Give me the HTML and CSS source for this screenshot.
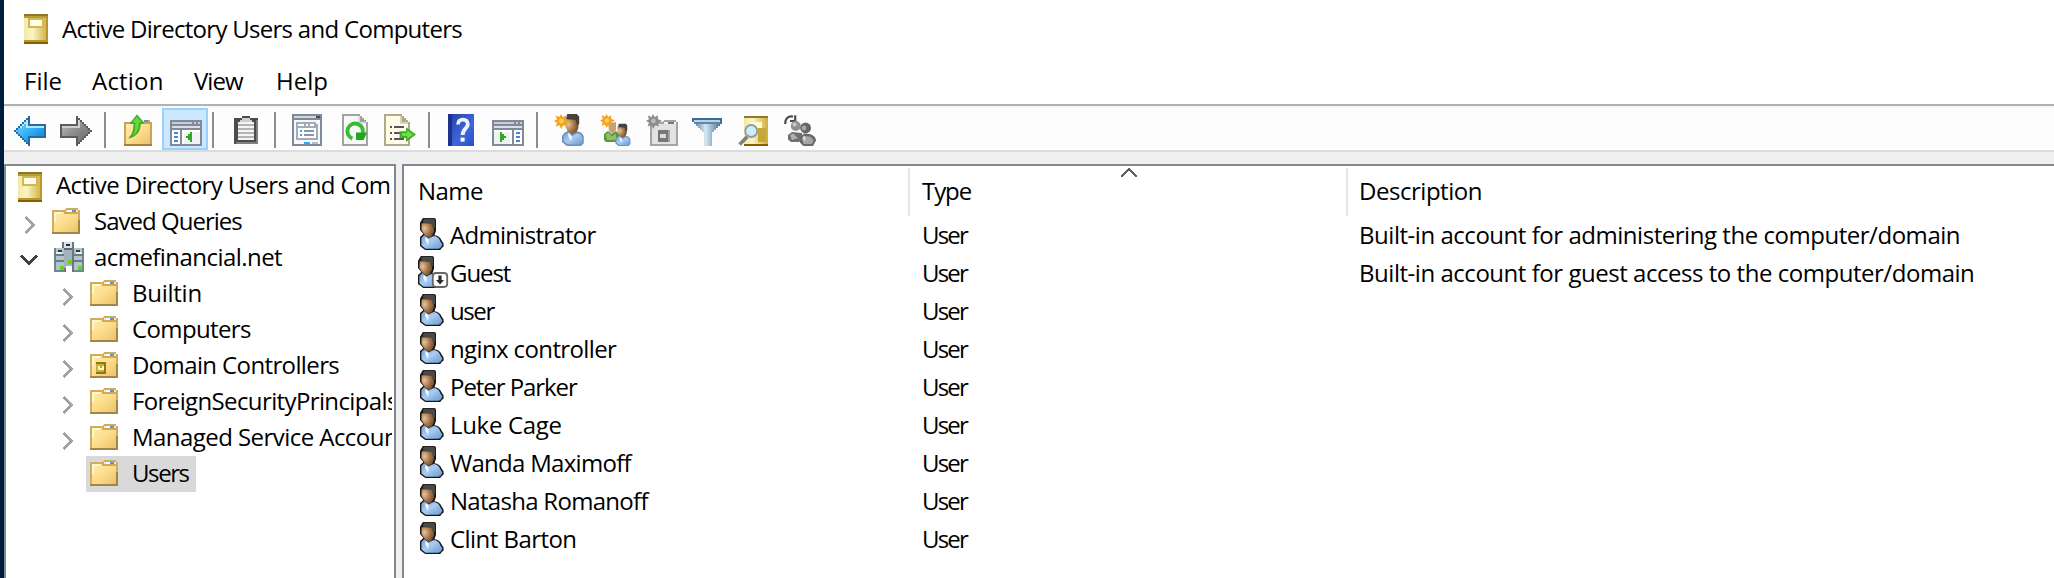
FILE: index.html
```
<!DOCTYPE html>
<html lang="en">
<head>
<meta charset="utf-8">
<title>Active Directory Users and Computers</title>
<link rel="stylesheet" href="styles.css">
</head>
<body>
<svg class="defs" aria-hidden="true">
  <defs>
    <linearGradient id="gold" x2="1" y2="0"><stop offset="0" stop-color="#f3e9a4"/><stop offset=".35" stop-color="#fbf4c4"/><stop offset="1" stop-color="#cfae3c"/></linearGradient>
    <linearGradient id="fold" x2="1" y2="1"><stop offset="0" stop-color="#ffedb0"/><stop offset=".5" stop-color="#fddc8a"/><stop offset="1" stop-color="#e9c36c"/></linearGradient>
    <linearGradient id="blue" x2="1" y2="1"><stop offset="0" stop-color="#7fd4ff"/><stop offset=".5" stop-color="#35b0f5"/><stop offset="1" stop-color="#0f78c8"/></linearGradient>
    <linearGradient id="grey" x2="1" y2="1"><stop offset="0" stop-color="#c0c0c0"/><stop offset=".5" stop-color="#8c8c8c"/><stop offset="1" stop-color="#6a6a6a"/></linearGradient>
    <radialGradient id="skin" cx=".25" cy=".35" r=".9"><stop offset="0" stop-color="#e8c49a"/><stop offset=".45" stop-color="#ac7c50"/><stop offset="1" stop-color="#543a26"/></radialGradient>
    <linearGradient id="shirt" x2="1" y2="1"><stop offset="0" stop-color="#6f9fd6"/><stop offset=".45" stop-color="#a9ccf3"/><stop offset="1" stop-color="#6a98ce"/></linearGradient>
    <linearGradient id="help" x2="1" y2="1"><stop offset="0" stop-color="#2440a0"/><stop offset=".6" stop-color="#3f66dc"/><stop offset="1" stop-color="#2a4cc0"/></linearGradient>
    <linearGradient id="tube" x2="1" y2="0"><stop offset="0" stop-color="#41688c"/><stop offset=".45" stop-color="#d6e8f4"/><stop offset="1" stop-color="#3e6488"/></linearGradient>

    <symbol id="book" viewBox="0 0 12 15">
      <path fill="url(#gold)" d="M0 0h12v15H0z"/>
      <path fill="#8f7626" d="M0 0h12v1H0z"/><path fill="#b89c3c" d="M0 1h12v1H0z"/>
      <path fill="#d0b858" d="M2 2h8v5H2z"/><path fill="#fffde2" d="M3 3h6v3H3z"/>
      <path fill="#b8962c" d="M11 1h1v13h-1zM0 13h12v1H0z"/><path fill="#865c04" d="M0 14h12v1H0z"/>
    </symbol>

    <symbol id="folder" viewBox="0 0 14 13">
      <path fill="#d0ab62" d="M0 1h6l1-1h6v1h1v12H0z"/>
      <path fill="url(#fold)" d="M1 2h5l1 1h6v9H1z"/>
      <path fill="#fff6cc" d="M1 2h4v1H1zM1 3h1v4H1z"/>
      <path fill="#ffe7a6" d="M7 1h6v1H7z"/><path fill="#f6fbff" d="M8 1h2v1H8z"/><path fill="#4a9be0" d="M10 1h2v1h-2z"/>
      <path fill="#d2a85c" d="M6 2h8v1H6z"/>
      <path fill="#957840" d="M0 12h14v1H0zM13 6h1v6h-1z" opacity=".75"/>
    </symbol>

    <symbol id="folder-dc" viewBox="0 0 14 13">
      <use href="#folder" width="14" height="13"/>
      <path fill="#8c7618" d="M3 5h5v6H3z"/><path fill="#c9b03c" d="M3 6h4v4H3z"/><path fill="#fff9b8" d="M4 7h3v2H4z"/><path fill="#b0a030" d="M5 7h1v1H5z"/>
    </symbol>

    <symbol id="domain" viewBox="0 0 15 15">
      <path fill="#687882" d="M4 0h6v15H4z"/><path fill="#d8e2e8" d="M5 0h4v3H5z"/><path fill="#a3b2bb" d="M5 3h4v10H5z"/>
      <path fill="#1c3440" d="M6 1h2v1H6z"/><path fill="#5c6c76" d="M5 3h4v1H5z"/><path fill="#fff" d="M6 12h3v3H6z"/>
      <path fill="#74858f" d="M0 3h5v12H0zM10 3h5v12h-5z"/>
      <path fill="#b5c3cb" d="M1 3h4v11H1zM10 3h4v11h-4z"/>
      <path fill="#e8eff3" d="M1 5h3v1H1zM11 5h3v1h-3z"/>
      <path fill="#21404e" d="M2 4h2v1H2zM11 4h2v1h-2z"/>
      <path fill="#6b7c86" d="M0 6h5v1H0zM10 6h5v1h-5zM0 9h5v1H0zM10 9h5v1h-5z"/>
      <path fill="#54e010" d="M7 9h2v2H7zM3 12h2v2H3zM12 12h2v2h-2z"/>
    </symbol>

    <symbol id="person" viewBox="0 0 16 16">
      <g shape-rendering="auto">
        <path fill="#1a1714" d="M2.4 0H8a1 1 0 0 1 1 1v5.500L8.200 8.600c1.800.2 3.100 1.200 3.600 2.600l1 1.500v1.600l-.8.600-.9 1.100H3.600L1 14V9.500L2.700 8 1 6V2.400z"/>
        <path fill="url(#skin)" d="M1.800 2.600h5L8 4v2.600L7 9 5 10 3.200 8.200 1.700 6z"/>
        <path fill="#4b4846" d="M2.800.4H8l.5 1v3.400l-.9.600L6.900 3 2.400 2.200z"/>
        <path fill="url(#shirt)" d="M1.700 10l1.400-1.500L5 10.300 7.800 9c1.900.2 2.900 1.200 3.300 2.600l1.100 1.600-.8 1.600-1 .6H3.800L1.700 13.600z"/>
        <path fill="#f4f8fc" d="M3.800 9.200L5.400 10.800 5 13.500 3.600 11z"/>
      </g>
    </symbol>

    <symbol id="person-disabled" viewBox="0 0 16 16">
      <use href="#person" x="-1" width="16" height="16"/>
      <g shape-rendering="auto">
        <rect x="7.400" y="8.500" width="7.200" height="7" rx="1.600" fill="#fff" stroke="#666" stroke-width=".9"/>
        <path fill="#2b2b2b" d="M10.200 9.800h1.600V12H13l-2 2.300L9 12h1.200z"/>
      </g>
    </symbol>

    <symbol id="spark" viewBox="0 0 8 8">
      <g shape-rendering="auto">
        <path fill="#f5a21c" d="M3.500 0l.9 1.600L6 .6 5.900 2.500 8 3.500 6 4.400 6.400 6.300 4.600 5.600 3.600 7.500 2.700 5.600.8 6.300 1.500 4.400 0 3.500 1.500 2.600.8.700 2.700 1.500z"/><circle cx="3.700" cy="3.500" r="1.200" fill="#ffd060"/>
      </g>
    </symbol>

    <symbol id="bust" viewBox="0 0 12 16">
      <g shape-rendering="auto">
        <path fill="url(#skin)" d="M1.500 2.500h5.500L8.200 4v3L7 9.500l-2 .8L3 9 1.800 6.500z"/>
        <path fill="#45423f" d="M2.600 0h4.800l1.200 1.200V5l-1 .8L6.800 3 2 2.500z"/>
        <path fill="#6d8fb8" d="M1.200 9.400L3 8.500 5 10l2.600-1.400c2 .4 3 1.400 3.300 2.800v3.200L9.500 16H2.400L0 14v-3z"/>
        <path fill="url(#shirt)" d="M1.500 10L3 9.200 5 11l2.700-1.400c1.600.4 2.300 1.200 2.600 2.400v2.300l-1.100 1H2.800L.8 13.500v-2z"/>
        <path fill="#eef5fc" d="M3.200 9.200L5 11.200 4.600 13.600 3 11z"/>
      </g>
    </symbol>

    <symbol id="back" viewBox="0 0 16 16">
      <path fill="#246ca8" d="M7 1h1v4h8v7H8v4H7v-1H6v-1H5v-1H4v-1H3v-1H2v-1H1V9H0V8h1V7h1V6h1V5h1V4h1V3h1V2h1z"/>
      <path fill="url(#blue)" d="M7 3v3h8v5H7v3H6v-1H5v-1H4v-1H3v-1H2V9H1V8h1V7h1V6h1V5h1V4h1V3z"/>
      <path fill="#b4e7ff" d="M6 3h1v3h8v1H6zM5 4h1v1H5zM4 5h1v1H4zM3 6h1v1H3z"/>
    </symbol>

    <symbol id="forward" viewBox="0 0 16 16">
      <path fill="#5c5c5c" d="M9 1H8v4H0v7h8v4h1v-1h1v-1h1v-1h1v-1h1v-1h1v-1h1V9h1V8h-1V7h-1V6h-1V5h-1V4h-1V3h-1V2H9z"/>
      <path fill="url(#grey)" d="M9 3v3H1v5h8v3h1v-1h1v-1h1v-1h1v-1h1V9h1V8h-1V7h-1V6h-1V5h-1V4h-1V3z"/>
      <path fill="#cfcfcf" d="M1 6h8V3h1v4H1z"/>
    </symbol>

    <symbol id="up" viewBox="0 0 16 16">
      <path fill="#c9a25c" d="M1 4h7l1-1h5v1h1v12H1z"/><path fill="url(#fold)" d="M2 5h12v10H2z"/>
      <path fill="#4a9be0" d="M11 3h2v1h-2z"/><path fill="#fff" d="M10 3h1v1h-1z"/><path fill="#a4803c" d="M1 15h14v1H1z"/>
      <g shape-rendering="auto">
        <path fill="#3aa526" d="M7.500.2L11.300 4.600 9.300 5C9.300 8.500 7.600 11.500 3 12.200 5 10.500 5.700 8.500 5.800 5L3.800 4.700z"/>
        <path fill="#62d83a" d="M7.500 1.300L10 4.100l-1.500.3C8.500 7.500 7.500 9.800 5.200 11 6.300 9.500 6.700 7 6.600 4.400L5 4.100z"/>
      </g>
    </symbol>

    <symbol id="tree-pane" viewBox="0 0 16 16">
      <path fill="#818a99" d="M0 3h16v13H0z"/><path fill="#c8ced8" d="M1 4h10v1H1zM12 4h1v1h-1zM14 4h1v1h-1z"/><path fill="#dce0e6" d="M1 6h14v1H1z"/>
      <path fill="#fff" d="M1 8h4v7H1zM6 8h9v7H6z"/><path fill="#f0f2f4" d="M7 9h8v6H7z"/>
      <path fill="#3f87d0" d="M2 9h2v1H2zM2 11h2v1H2zM2 13h2v1H2z"/>
      <path fill="#2faa20" d="M10 9h1v5h-1v-1H9v-1H8v-1h1v-1h1z"/>
    </symbol>

    <symbol id="action-pane" viewBox="0 0 16 16">
      <path fill="#818a99" d="M0 3h16v13H0z"/><path fill="#c8ced8" d="M1 4h10v1H1zM12 4h1v1h-1zM14 4h1v1h-1z"/><path fill="#dce0e6" d="M1 6h14v1H1z"/>
      <path fill="#fff" d="M1 8h9v7H1zM11 8h4v7h-4z"/><path fill="#f0f2f4" d="M1 9h8v6H1z"/>
      <path fill="#3f87d0" d="M12 9h2v1h-2zM12 11h2v1h-2zM12 13h2v1h-2z"/>
      <path fill="#2faa20" d="M4 9h1v1h1v1h1v1H6v1H5v1H4z"/>
    </symbol>

    <symbol id="clipboard" viewBox="0 0 16 16">
      <path fill="#4c4c4e" d="M2 2h4V1h4v1h4v13H2z"/><path fill="#808080" d="M3 14h11v1H3zM13 3h1v11h-1z"/>
      <path fill="#f5f5f5" d="M4 4h8v9H4z"/><path fill="#d0d0d0" d="M6 2h4v1h1v1H5V3h1z"/>
      <path fill="#b4b4b4" d="M4 5h8v1H4zM4 7h8v1H4zM4 9h8v1H4zM4 11h8v1H4z"/>
    </symbol>

    <symbol id="properties" viewBox="0 0 16 16">
      <path fill="#7f8a98" d="M0 0h15v16H0z"/><path fill="#d2d8e0" d="M1 1h11v1H1z"/><path fill="#3b4d66" d="M12 1h2v1h-2z"/><path fill="#f7f8fa" d="M1 3h13v12H1z"/>
      <path fill="#a2aabc" d="M2 4h10v1h1v8H2z"/><path fill="#fff" d="M3 5h3v1H3zM7 5h1v1H7zM9 5h2v1H9zM3 7h9v5H3z"/>
      <path fill="#22b0ee" d="M4 8h1v1H4zM4 10h1v1H4zM6 14h3v1H6z"/><path fill="#8995a8" d="M6 8h5v1H6zM6 10h5v1H6z"/><path fill="#b8bdc4" d="M10 14h3v1h-3z"/>
    </symbol>

    <symbol id="refresh" viewBox="0 0 16 16">
      <path fill="#a2a2a2" d="M2 0h9v1h1v1h1v1h1v1h1v12H2z"/><path fill="#f8f8f8" d="M3 1h7v4h4v10H3z"/><path fill="#dedede" d="M11 1v3h3v1h-4V1z"/>
      <g shape-rendering="auto">
        <path fill="none" stroke="#3abb34" stroke-width="1.900" d="M7.200 12.300A3.900 3.900 0 1 1 12 10.500"/>
        <path fill="#1fa81c" d="M9 9.200h5.500L12.800 13H9z"/>
      </g>
    </symbol>

    <symbol id="export" viewBox="0 0 16 16">
      <path fill="#b0a98c" d="M0 0h9v1h1v1h1v1h1v1h1v12H0z"/><path fill="#fffde6" d="M1 1h7v4h4v10H1z"/><path fill="#d8d2b4" d="M9 1v3h3v1H8V1z"/>
      <path fill="#55526a" d="M3 6h1v1H3zM5 6h5v1H5zM3 9h1v1H3zM5 9h3v1H5zM3 12h1v1H3zM5 12h5v1H5z"/>
      <g shape-rendering="auto">
        <path fill="#3fae2c" d="M11 6.600L16 10.200 11 14v-2H7.800V8.600H11z"/><path fill="#6be03e" d="M11.600 8.200L14.500 10.200l-2.900 2.200V11H9V9.500h2.600z"/>
      </g>
    </symbol>

    <symbol id="question" viewBox="0 0 16 16">
      <path fill="url(#help)" d="M1 0h13v16H1z"/><path fill="#1c328c" d="M1 0h2v16H1z"/>
      <g shape-rendering="auto">
        <path fill="none" stroke="#eef2ff" stroke-width="1.900" d="M6 5.200C6 2 11 2 10.900 5.200 10.800 7.500 8.500 7 8.300 10.500"/><path fill="#fff" d="M7.300 11.800h2v2h-2z"/>
      </g>
    </symbol>

    <symbol id="new-user" viewBox="0 0 16 16">
      <use href="#bust" x="4" width="12" height="16"/><use href="#spark" width="8" height="8"/>
    </symbol>

    <symbol id="new-group" viewBox="0 0 16 16">
      <g shape-rendering="auto">
        <path fill="#c9a070" d="M4 4.500L8 4v4L6.500 10 4.500 8.500z"/><path fill="#5c9440" d="M2 10l2-1.500L6 10l2-1.500 2 2V14H3l-1-1z"/><path fill="#8cc068" d="M2.800 10.300l1.500-1 1.500 1.800L8 10v3H3.600z"/>
      </g>
      <use href="#bust" x="7.600" y="4.800" width="8.400" height="11.200"/><use href="#spark" width="7.500" height="7.500"/>
    </symbol>

    <symbol id="new-ou" viewBox="0 0 16 16">
      <path fill="#a4a4a4" d="M2 4h6l1-1h6v1h1v12H2z"/><path fill="#e2e2e2" d="M3 5h12v10H3z"/><path fill="#f3f3f3" d="M9 4h6v1H9z"/><path fill="#777" d="M11 4h3v1h-3z"/>
      <path fill="#777" d="M6 8h5v6H6z"/><path fill="#dcdcdc" d="M7 10h3v2H7z"/><path fill="#a4a4a4" d="M11 8h1v6h-1z"/>
      <g shape-rendering="auto">
        <path fill="#8c8c8c" d="M3.500 0l.9 1.600L6 .6 5.900 2.500 8 3.500 6 4.400 6.400 6.300 4.600 5.600 3.600 7.500 2.700 5.600.8 6.300 1.500 4.400 0 3.500 1.500 2.600.8.700 2.700 1.500z"/><circle cx="3.700" cy="3.500" r="1.200" fill="#bbb"/>
      </g>
    </symbol>

    <symbol id="filter" viewBox="0 0 16 16">
      <path fill="url(#tube)" d="M0 2h15v3h-1v1h-1v1h-1v1h-1v1h-1v7H6V9H5V8H4V7H3V6H2V5H1V4H0z"/>
      <path fill="#3f6a92" d="M0 2h15v1H0z"/><path fill="#b4d4ea" d="M1 3h13v1H1z"/><path fill="#5d87ac" d="M1 4h13v1H1z"/>
    </symbol>

    <symbol id="find" viewBox="0 0 16 16">
      <path fill="url(#gold)" d="M3 1h12v15H3z"/><path fill="#917826" d="M3 1h12v1H3z"/><path fill="#c7a63a" d="M10 7h4v7h-4z"/><path fill="#fffbd2" d="M6 4h6v3H6z"/><path fill="#865c04" d="M3 15h12v1H3z"/>
      <g shape-rendering="auto">
        <path stroke="#7d8186" stroke-width="1.800" d="M.8 15.200l3.800-3.800"/><circle cx="6.600" cy="8.500" r="3" fill="#cdeef6" stroke="#8c9ca4" stroke-width=".9"/>
      </g>
    </symbol>

    <symbol id="add-member" viewBox="0 0 16 16">
      <g shape-rendering="auto">
        <path fill="none" stroke="#4c4c4c" stroke-width="1.100" d="M.6 5C.5 2.500 2 .8 4.500 1.300M3 3.500h2.600V.6"/>
        <circle cx="5.900" cy="6" r="2.500" fill="#909090"/><circle cx="5.300" cy="5.300" r="1" fill="#c8c8c8"/>
        <path fill="#707070" d="M2 10.500L4 9l5 .5V13L7.500 14H3.500L2 12.800z"/><path fill="#b0b0b0" d="M3 10.600l1.500-.8L7 12l-3 1z"/>
        <circle cx="10.800" cy="7" r="2.700" fill="#666"/><circle cx="10" cy="7" r="1.200" fill="#a8a8a8"/>
        <path fill="#6a6a6a" d="M8 11.500L10 9.800l2.500.2c2 .3 3.400 1.500 3.500 3.300L14.500 16H9.600L8 14.300z"/><path fill="#a6a6a6" d="M9 12l1.300-1 3 .4 1.500 1.800-1 1.800h-4z"/><path fill="#e2e2e2" d="M9.800 10.800l1 1-.3 2-1-1.500z"/>
      </g>
    </symbol>

    <symbol id="chev" viewBox="0 0 6 9">
      <path fill="none" stroke="#a3a3a3" stroke-width="1.400" d="M.7.5l4 4-4 4"/>
    </symbol>
    <symbol id="chev-open" viewBox="0 0 9 6">
      <path fill="none" stroke="#404040" stroke-width="1.600" d="M.5.7l4 4 4-4"/>
    </symbol>
  </defs>
</svg>

<div class="window">
  <header class="titlebar">
    <svg class="book"><use href="#book"/></svg>
    <span class="k7">Active Directory Users and Computers</span>
  </header>

  <nav class="menu">
    <span class="file">File</span><span class="action">Action</span><span class="view k9">View</span><span>Help</span>
  </nav>

  <div class="toolbar">
    <span class="btn"><svg><use href="#back"/></svg></span>
    <span class="btn"><svg><use href="#forward"/></svg></span>
    <i class="sep"></i>
    <span class="btn"><svg><use href="#up"/></svg></span>
    <span class="btn on"><svg><use href="#tree-pane"/></svg></span>
    <i class="sep"></i>
    <span class="btn"><svg><use href="#clipboard"/></svg></span>
    <i class="sep"></i>
    <span class="btn"><svg><use href="#properties"/></svg></span>
    <span class="btn"><svg><use href="#refresh"/></svg></span>
    <span class="btn"><svg><use href="#export"/></svg></span>
    <i class="sep"></i>
    <span class="btn"><svg><use href="#question"/></svg></span>
    <span class="btn"><svg><use href="#action-pane"/></svg></span>
    <i class="sep"></i>
    <span class="btn"><svg><use href="#new-user"/></svg></span>
    <span class="btn"><svg><use href="#new-group"/></svg></span>
    <span class="btn"><svg><use href="#new-ou"/></svg></span>
    <span class="btn"><svg><use href="#filter"/></svg></span>
    <span class="btn"><svg><use href="#find"/></svg></span>
    <span class="btn"><svg><use href="#add-member"/></svg></span>
  </div>

  <main class="panes">
    <ul class="tree">
      <li class="root"><svg class="book"><use href="#book"/></svg><span class="k6">Active Directory Users and Computers</span></li>
      <li class="l1"><svg class="chev"><use href="#chev"/></svg><svg class="folder"><use href="#folder"/></svg><span class="k9">Saved Queries</span></li>
      <li class="l1"><svg class="chev-open"><use href="#chev-open"/></svg><svg class="domain"><use href="#domain"/></svg><span class="k5">acmefinancial.net</span></li>
      <li class="l2"><svg class="chev"><use href="#chev"/></svg><svg class="folder"><use href="#folder"/></svg><span class="k2">Builtin</span></li>
      <li class="l2"><svg class="chev"><use href="#chev"/></svg><svg class="folder"><use href="#folder"/></svg><span class="k6">Computers</span></li>
      <li class="l2"><svg class="chev"><use href="#chev"/></svg><svg class="folder"><use href="#folder-dc"/></svg><span class="k6">Domain Controllers</span></li>
      <li class="l2"><svg class="chev"><use href="#chev"/></svg><svg class="folder"><use href="#folder"/></svg><span class="k6">ForeignSecurityPrincipals</span></li>
      <li class="l2"><svg class="chev"><use href="#chev"/></svg><svg class="folder"><use href="#folder"/></svg><span class="k5">Managed Service Accounts</span></li>
      <li class="leaf"><svg class="folder"><use href="#folder"/></svg><span class="k13">Users</span></li>
    </ul>

    <section class="list">
      <div class="head">
        <span class="name k5">Name</span>
        <span class="type k10">Type<svg class="sort" viewBox="0 0 9 5"><path d="M.6 4.600l3.900-3.900 3.900 3.900"/></svg></span>
        <span class="desc k4">Description</span>
      </div>
      <div class="row"><span class="name"><svg><use href="#person"/></svg><b class="k7">Administrator</b></span><span class="type k18">User</span><span class="desc k4">Built-in account for administering the computer/domain</span></div>
      <div class="row"><span class="name"><svg><use href="#person-disabled"/></svg><b class="k10">Guest</b></span><span class="type k18">User</span><span class="desc k4">Built-in account for guest access to the computer/domain</span></div>
      <div class="row"><span class="name"><svg><use href="#person"/></svg><b class="k13">user</b></span><span class="type k18">User</span></div>
      <div class="row"><span class="name"><svg><use href="#person"/></svg><b class="k6">nginx controller</b></span><span class="type k18">User</span></div>
      <div class="row"><span class="name"><svg><use href="#person"/></svg><b class="k10">Peter Parker</b></span><span class="type k18">User</span></div>
      <div class="row"><span class="name"><svg><use href="#person"/></svg><b class="k3">Luke Cage</b></span><span class="type k18">User</span></div>
      <div class="row"><span class="name"><svg><use href="#person"/></svg><b class="k7">Wanda Maximoff</b></span><span class="type k18">User</span></div>
      <div class="row"><span class="name"><svg><use href="#person"/></svg><b class="k7">Natasha Romanoff</b></span><span class="type k18">User</span></div>
      <div class="row"><span class="name"><svg><use href="#person"/></svg><b class="k5">Clint Barton</b></span><span class="type k18">User</span></div>
    </section>
  </main>
</div>
</body>
</html>
```
FILE: styles.css
```
* { box-sizing: border-box; }
body {
  margin: 0;
  height: 578px;
  overflow: hidden;
  background: #fff;
  color: #000;
  font: 24px "Open Sans", "Noto Sans", sans-serif;
}
svg { display: block; flex: none; shape-rendering: crispEdges; }
.defs { position: absolute; width: 0; height: 0; }

.window {
  display: flex;
  flex-direction: column;
  height: 578px;
  border-left: 4px solid #001c3c;
}

/* Letter-spacing steps, in tenths of a pixel */
.k2 { letter-spacing: -.26px; }
.k3 { letter-spacing: -.32px; }
.k4 { letter-spacing: -.465px; }
.k5 { letter-spacing: -.55px; }
.k6 { letter-spacing: -.62px; }
.k7 { letter-spacing: -.71px; }
.k9 { letter-spacing: -.98px; }
.k10 { letter-spacing: -1.06px; }
.k13 { letter-spacing: -1.4px; }
.k18 { letter-spacing: -1.8px; }

.titlebar { display: flex; height: 60px; padding-left: 20px; line-height: 58px; white-space: nowrap; }
.titlebar .book { margin: 14px 14px 0 0; }
.book { width: 24px; height: 30px; }

.menu { display: flex; height: 44px; padding-left: 20px; line-height: 42px; }
.menu .file { width: 68px; }
.menu .action { width: 102px; letter-spacing: .2px; }
.menu .view { width: 82px; }

.toolbar {
  display: flex;
  height: 48px;
  padding: 2px 0 0 4px;
  border-top: 2px solid #b2b2b4;
  border-bottom: 2px solid #dcdcdc;
  background: linear-gradient(#f4f7fc 2px, #fdfdfe 2px);
}
.btn { width: 46px; height: 42px; padding: 6px; }
.btn svg { width: 32px; height: 32px; }
.btn.on { padding: 4px 6px; border: 2px solid #99d1ff; background: #cce8ff; }
.sep { width: 16px; height: 36px; margin-top: 4px; background: linear-gradient(#8c8c8c, #8c8c8c) 4px 0 / 2px 100% no-repeat; }

.panes { display: flex; flex: 1; padding-top: 12px; background: #f0f0f0; }
.tree {
  width: 392px;
  margin: 0 6px 0 0;
  padding: 2px 2px 0 0;
  border: 2px solid #828790;
  border-bottom: 0;
  background: #fff;
  list-style: none;
}
.tree li { display: flex; height: 36px; overflow: hidden; line-height: 34px; white-space: nowrap; }
.root { padding-left: 12px; }
.root .book { margin: 4px 14px 0 0; }
.l1 { padding-left: 14px; }
.l2 { padding-left: 56px; }
.chev { width: 12px; height: 18px; margin: 12px 16px 0 0; }
.l1 .chev { margin-left: 4px; }
.chev-open { width: 18px; height: 12px; margin: 14px 16px 0 0; }
.folder { width: 28px; height: 26px; margin: 4px 14px 0 0; }
.domain { width: 30px; height: 30px; margin: 2px 10px 0 0; }
.tree .leaf { width: 110px; margin-left: 80px; padding-left: 4px; background: #d9d9d9; }

.list { flex: 1; border: solid #828790; border-width: 2px 0 0 2px; background: #fff; }
.head, .row { display: grid; grid-template-columns: 506px 438px 1fr; white-space: nowrap; }
.head { height: 50px; padding-top: 2px; line-height: 46px; }
.head span { height: 48px; border-right: 2px solid #e5e5e5; }
.head .desc { border: 0; }
.head .name { padding-left: 14px; }
.type { position: relative; padding-left: 12px; }
.desc { padding-left: 11px; }
.sort { position: absolute; left: 210px; top: 0; width: 18px; height: 10px; fill: none; stroke: #606060; }
.row { height: 38px; line-height: 38px; }
.row .name { display: flex; padding-left: 14px; }
.row .name svg { width: 32px; height: 32px; margin-top: 2px; }
.row b { font-weight: 400; }
```
